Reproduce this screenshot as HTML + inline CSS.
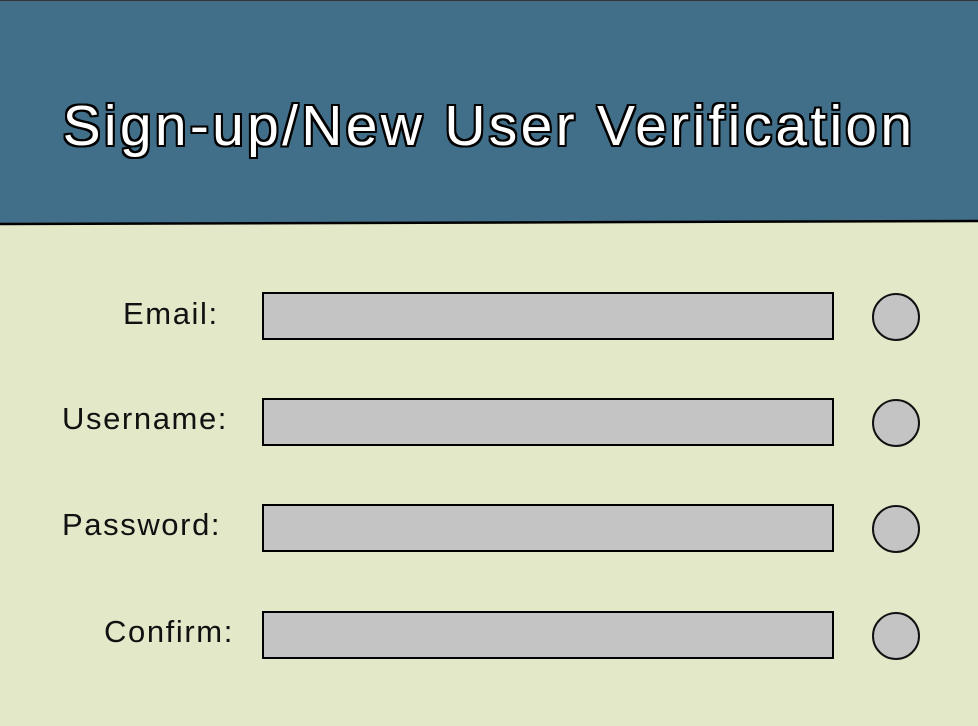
<!DOCTYPE html>
<html><head><style>
body{margin:0;width:978px;height:726px;background:#e2e8c8;position:relative;overflow:hidden;font-family:"Liberation Sans",Arial,sans-serif}
.hdr{position:absolute;left:0;top:0;width:978px;height:223px;background:#416e89;border-top:1px solid #333}
.line{position:absolute;left:0;top:0;width:978px;height:230px}
h1{position:absolute;left:0;top:93px;width:978px;margin:0;text-align:center;font-size:57px;font-weight:normal;color:#fff;letter-spacing:3.3px;
text-shadow:-2px 0 #000,2px 0 #000,0 -2px #000,0 2px #000,-2px -2px #000,2px 2px #000,-2px 2px #000,2px -2px #000,-1px 2px #000,1px -2px #000}
.lbl{position:absolute;font-size:31px;color:#111;letter-spacing:1.6px}
.f{position:absolute;left:262px;width:568px;height:44px;background:#c4c4c4;border:2px solid #000}
.c{position:absolute;left:872px;width:44px;height:44px;border-radius:50%;background:#c4c4c4;border:2px solid #111}
</style></head><body>
<div class="hdr"></div>
<svg class="line" viewBox="0 0 978 230"><polygon points="0,223 978,220 978,230 0,230" fill="#e2e8c8"/><line x1="0" y1="224" x2="978" y2="221" stroke="#000" stroke-width="2.5"/></svg>
<h1>Sign-up/New User Verification</h1>
<div class="lbl" style="left:123px;top:296px">Email:</div>
<div class="f" style="top:292px"></div><div class="c" style="top:293px"></div>
<div class="lbl" style="left:62px;top:401px">Username:</div>
<div class="f" style="top:398px"></div><div class="c" style="top:399px"></div>
<div class="lbl" style="left:62px;top:507px">Password:</div>
<div class="f" style="top:504px"></div><div class="c" style="top:505px"></div>
<div class="lbl" style="left:104px;top:614px">Confirm:</div>
<div class="f" style="top:611px"></div><div class="c" style="top:612px"></div>
</body></html>
